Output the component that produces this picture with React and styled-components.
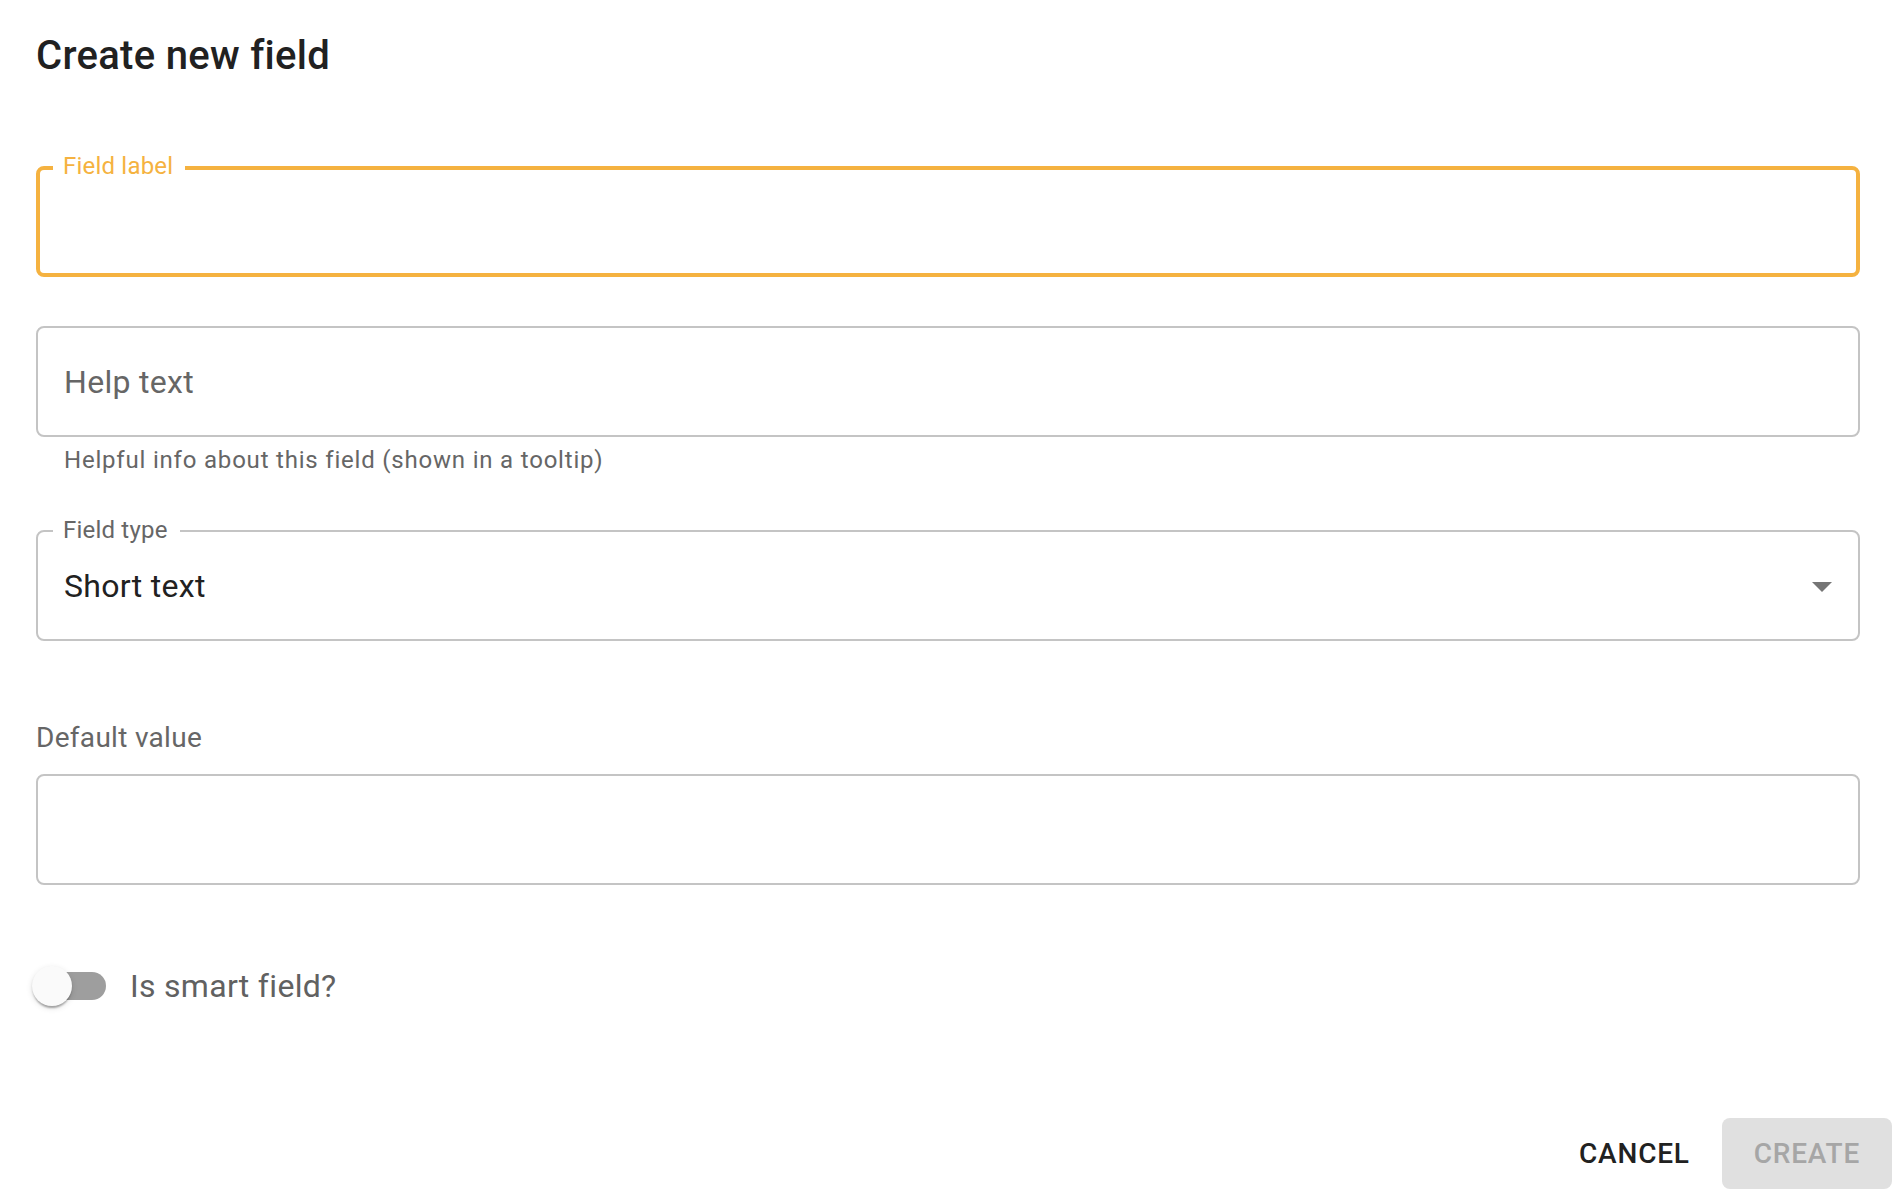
import React from 'react'
import { styled, createGlobalStyle } from 'styled-components'

const ACCENT = '#f5b240'
const IDLE = '#c4c4c4'

const GlobalStyle = createGlobalStyle`
  html, body {
    margin: 0;
    background: #fff;
    overflow: hidden;
  }
  body {
    font-family: Roboto, "Liberation Sans", Arial, sans-serif;
    -webkit-font-smoothing: antialiased;
  }
`

const Page = styled.div`
  padding: 24px 38px 0 36px;
  box-sizing: border-box;
  width: 1898px;
`

const Title = styled.h2`
  margin: 0;
  font-size: 40px;
  line-height: 64px;
  font-weight: 500;
  letter-spacing: 0.3px;
  color: #212121;
`

const Field = styled.div`
  position: relative;
  display: flex;
  align-items: center;
  box-sizing: border-box;
  height: 111px;
  margin-top: ${p => p.$gap || 0}px;
  border: ${p => (p.$focused ? `4px solid ${ACCENT}` : `2px solid ${IDLE}`)};
  border-radius: 8px;
`

const FloatLabel = styled.label`
  position: absolute;
  top: ${p => (p.$focused ? -16 : -14)}px;
  left: ${p => (p.$focused ? 13 : 15)}px;
  padding: 0 12px 0 10px;
  background: #fff;
  font-size: 24px;
  line-height: 24px;
  letter-spacing: 0.2px;
  color: ${p => (p.$focused ? ACCENT : '#666')};
`

const Input = styled.input`
  flex: 1;
  height: 100%;
  min-width: 0;
  box-sizing: border-box;
  border: none;
  outline: none;
  background: transparent;
  padding: 0 ${p => (p.$focused ? 24 : 26)}px;
  font-family: inherit;
  font-size: 32px;
  letter-spacing: 0.3px;
  color: #212121;

  &::placeholder {
    color: #666;
    opacity: 1;
  }
`

const SelectValue = styled.div`
  flex: 1;
  padding-left: 26px;
  font-size: 32px;
  letter-spacing: 0.3px;
  color: #212121;
`

const Arrow = styled.svg`
  width: 48px;
  height: 48px;
  margin-right: 12px;
  fill: #757575;
`

const Helper = styled.p`
  margin: 11px 0 0 28px;
  font-size: 24px;
  line-height: 24px;
  letter-spacing: 0.8px;
  color: #666;
`

const SectionLabel = styled.div`
  margin-top: 83px;
  font-size: 28px;
  line-height: 28px;
  letter-spacing: 0.3px;
  color: #666;
`

const SwitchRow = styled.label`
  display: flex;
  align-items: center;
  margin: 63px 0 0 -22px;
  font-size: 32px;
  line-height: 40px;
  letter-spacing: 0.3px;
  color: #616161;
`

const SwitchRoot = styled.span`
  position: relative;
  display: inline-block;
  padding: 24px;
`

const Track = styled.span`
  display: block;
  width: 68px;
  height: 28px;
  border-radius: 14px;
  background: #9e9e9e;
`

const Thumb = styled.span`
  position: absolute;
  top: 18px;
  left: 18px;
  width: 40px;
  height: 40px;
  border-radius: 50%;
  background: #fafafa;
  box-shadow: 0 4px 2px -2px rgba(0, 0, 0, 0.2), 0 2px 2px 0 rgba(0, 0, 0, 0.14),
    0 2px 6px 0 rgba(0, 0, 0, 0.12);
`

const Actions = styled.div`
  display: flex;
  justify-content: flex-end;
  align-items: center;
  gap: 16px;
  margin: 94px -32px 0 0;
`

const Button = styled.button`
  height: 71px;
  padding: 0 ${p => (p.$contained ? 32 : 16)}px;
  border: none;
  border-radius: 8px;
  background: ${p => (p.$contained ? '#e0e0e0' : 'transparent')};
  color: ${p => (p.disabled ? '#a6a6a6' : '#212121')};
  font-family: inherit;
  font-size: 28px;
  font-weight: 500;
  letter-spacing: 0.8px;
  text-transform: uppercase;
`

const App = () => {
  return (
    <Page>
      <GlobalStyle />
      <Title>Create new field</Title>

      <Field $focused $gap={78}>
        <FloatLabel $focused>Field label</FloatLabel>
        <Input $focused />
      </Field>

      <Field $gap={49}>
        <Input placeholder="Help text" />
      </Field>
      <Helper>Helpful info about this field (shown in a tooltip)</Helper>

      <Field $gap={58}>
        <FloatLabel>Field type</FloatLabel>
        <SelectValue>Short text</SelectValue>
        <Arrow viewBox="0 0 24 24">
          <path d="M7 10l5 5 5-5z" />
        </Arrow>
      </Field>

      <SectionLabel>Default value</SectionLabel>
      <Field $gap={22}>
        <Input />
      </Field>

      <SwitchRow>
        <SwitchRoot>
          <Track />
          <Thumb />
        </SwitchRoot>
        Is smart field?
      </SwitchRow>

      <Actions>
        <Button>Cancel</Button>
        <Button $contained disabled>Create</Button>
      </Actions>
    </Page>
  )
}

export default App
